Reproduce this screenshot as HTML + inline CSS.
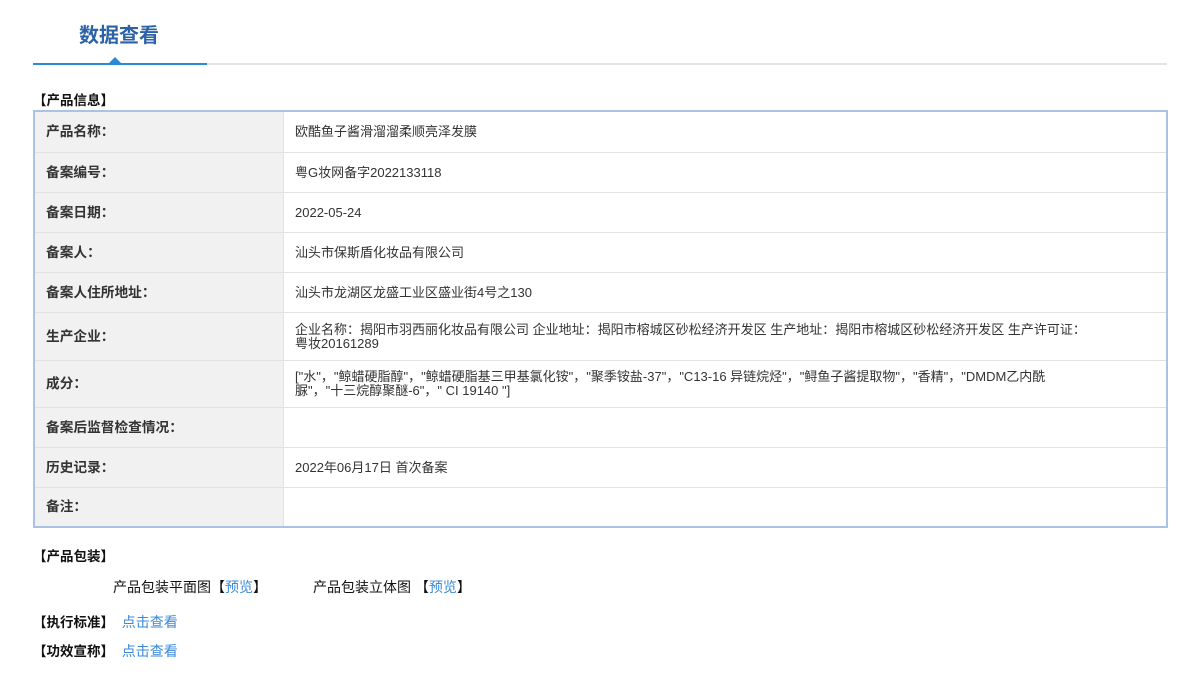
<!DOCTYPE html>
<html><head><meta charset="utf-8"><style>
body{margin:0;width:1197px;height:694px;background:#fff;font-family:"Liberation Sans","Noto Sans CJK SC",sans-serif;font-size:13px;color:#333;position:relative;overflow:hidden}
.a{position:absolute}
.title{left:79px;top:22px;font-size:20px;font-weight:bold;color:#2b63a6;line-height:28px}
.gl{left:33px;top:63px;width:1134px;height:2px;background:#e4e4e4}
.bl{left:33px;top:63px;width:174px;height:2px;background:#2b8ad8}
.tri{left:109px;top:57px;width:0;height:0;border-left:6px solid transparent;border-right:6px solid transparent;border-bottom:6px solid #2b8ad8}
.h{font-weight:bold;color:#111;line-height:16px;font-size:13.5px}
table{position:absolute;left:33px;top:110px;width:1135px;border-collapse:collapse;border:2px solid #a9c2e6}
td{border-bottom:1px solid #e2e2e2;padding:1px 12px 0;line-height:14px;vertical-align:middle}
td.l{width:225px;background:#f1f1f1;font-weight:bold;color:#333;border-right:1px solid #e2e2e2;padding-left:11px;font-size:13.7px}
td.v{color:#333;padding-left:11px}
a{color:#3a8ad8;text-decoration:none}
</style></head><body>
<div class="a title">数据查看</div>
<div class="a gl"></div><div class="a bl"></div><div class="a tri"></div>
<div class="a h" style="left:33px;top:93px">【产品信息】</div>
<table>
<tr style="height:41px"><td class="l">产品名称：</td><td class="v">欧酷鱼子酱滑溜溜柔顺亮泽发膜</td></tr>
<tr style="height:40px"><td class="l">备案编号：</td><td class="v">粤G妆网备字2022133118</td></tr>
<tr style="height:40px"><td class="l">备案日期：</td><td class="v">2022-05-24</td></tr>
<tr style="height:40px"><td class="l">备案人：</td><td class="v">汕头市保斯盾化妆品有限公司</td></tr>
<tr style="height:40px"><td class="l">备案人住所地址：</td><td class="v">汕头市龙湖区龙盛工业区盛业街4号之130</td></tr>
<tr style="height:48px"><td class="l">生产企业：</td><td class="v">企业名称：揭阳市羽西丽化妆品有限公司 企业地址：揭阳市榕城区砂松经济开发区 生产地址：揭阳市榕城区砂松经济开发区 生产许可证：<br>粤妆20161289</td></tr>
<tr style="height:47px"><td class="l">成分：</td><td class="v">["水"，"鲸蜡硬脂醇"，"鲸蜡硬脂基三甲基氯化铵"，"聚季铵盐-37"，"C13-16 异链烷烃"，"鲟鱼子酱提取物"，"香精"，"DMDM乙内酰<br>脲"，"十三烷醇聚醚-6"，" CI 19140 "]</td></tr>
<tr style="height:40px"><td class="l">备案后监督检查情况：</td><td class="v"></td></tr>
<tr style="height:40px"><td class="l">历史记录：</td><td class="v">2022年06月17日 首次备案</td></tr>
<tr style="height:40px"><td class="l">备注：</td><td class="v"></td></tr>
</table>
<div class="a h" style="left:33px;top:549px">【产品包装】</div>
<div class="a" style="left:113px;top:577px;color:#111;font-size:14px">产品包装平面图【<a>预览</a>】</div>
<div class="a" style="left:313px;top:577px;color:#111;font-size:14px">产品包装立体图 【<a>预览</a>】</div>
<div class="a h" style="left:33px;top:614px">【执行标准】 <a style="font-weight:normal;font-size:14px;margin-left:4px">点击查看</a></div>
<div class="a h" style="left:33px;top:643px">【功效宣称】 <a style="font-weight:normal;font-size:14px;margin-left:4px">点击查看</a></div>
</body></html>
